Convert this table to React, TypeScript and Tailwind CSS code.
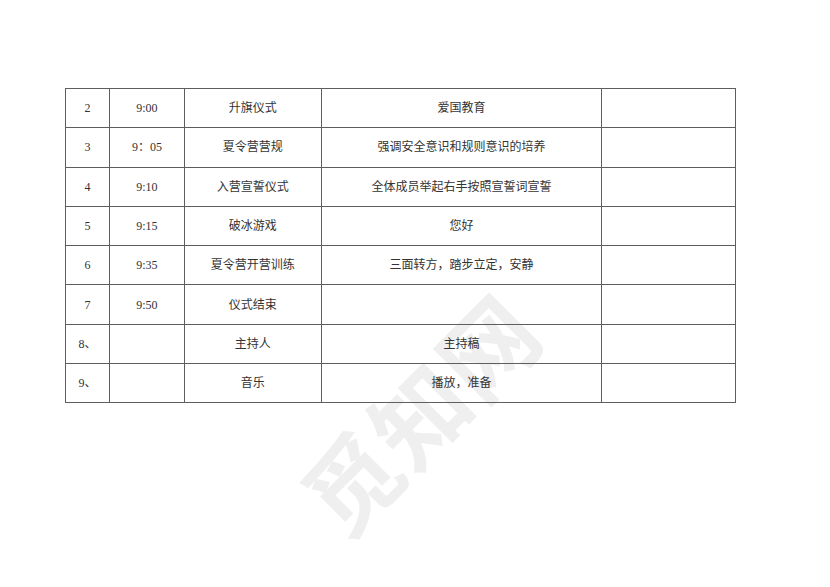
const rows: [string, string, string, string][] = [
  ['2', '9:00', '升旗仪式', '爱国教育'],
  ['3', '9：05', '夏令营营规', '强调安全意识和规则意识的培养'],
  ['4', '9:10', '入营宣誓仪式', '全体成员举起右手按照宣誓词宣誓'],
  ['5', '9:15', '破冰游戏', '您好'],
  ['6', '9:35', '夏令营开营训练', '三面转方，踏步立定，安静'],
  ['7', '9:50', '仪式结束', ''],
  ['8、', '', '主持人', '主持稿'],
  ['9、', '', '音乐', '播放，准备'],
]

export default function App() {
  return (
    <div
      className="relative w-[830px] h-[587px] overflow-hidden bg-white pl-[65px] pt-[88px]"
      style={{ fontFamily: '"Liberation Serif", "Noto Sans CJK SC", serif' }}
    >
      {/* watermark, behind the table */}
      <div
        className="pointer-events-none absolute left-[418px] top-[412px] z-0 -translate-x-1/2 -translate-y-1/2 -rotate-45 whitespace-nowrap text-[94px] font-bold tracking-[2px] text-[#efefef] select-none"
        style={{ fontFamily: '"Noto Sans CJK SC", sans-serif' }}
      >
        觅知网
      </div>

      <table className="relative z-10 w-[671px] border-collapse text-[12px] text-[#333]">
        <colgroup>
          <col className="w-[44px]" />
          <col className="w-[75px]" />
          <col className="w-[137px]" />
          <col className="w-[281px]" />
          <col className="w-[134px]" />
        </colgroup>
        <tbody>
          {rows.map((r, i) => (
            <tr key={i} className="h-[39.3px]">
              {r.map((c, j) => (
                <td key={j} className="border border-[#5e5e5e] p-0 text-center align-middle">
                  {c}
                </td>
              ))}
              <td className="border border-[#5e5e5e] p-0" />
            </tr>
          ))}
        </tbody>
      </table>
    </div>
  )
}
